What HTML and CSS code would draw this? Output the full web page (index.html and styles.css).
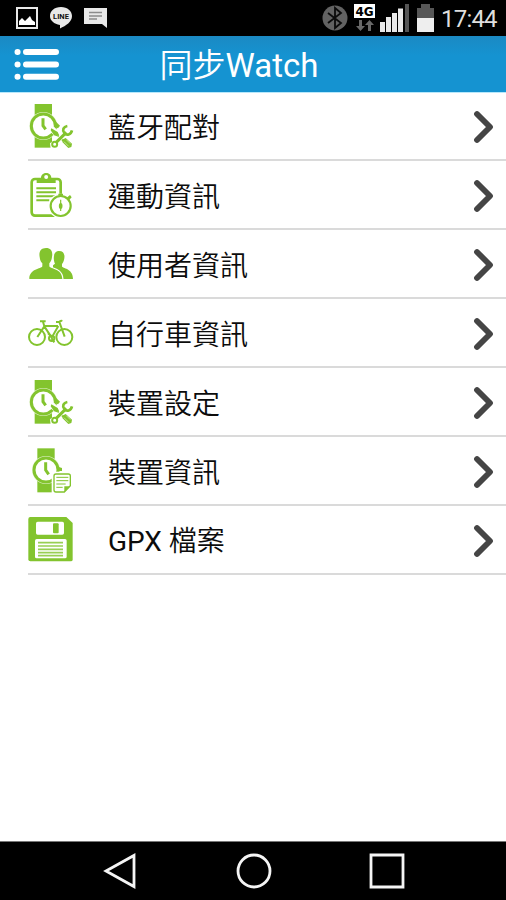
FILE: index.html
```html
<!DOCTYPE html>
<html lang="zh-Hant">
<head>
<meta charset="utf-8">
<title>同步Watch</title>
<link rel="stylesheet" href="styles.css">
</head>
<body>
<svg class="defs" width="0" height="0" aria-hidden="true">
  <symbol id="chevron" viewBox="0 0 22 36"><path d="M4 5L17 18L4 31" fill="none" stroke="#454545" stroke-width="5.8" stroke-linecap="round" stroke-linejoin="round"/></symbol>
  <symbol id="watch-tools" viewBox="0 0 138 138">
    <path d="M20 3h52v131H20z" fill="#83c42e"/>
    <circle cx="46" cy="69" r="42" fill="#e6f4d4"/>
    <circle cx="46" cy="69" r="36" fill="#fff" stroke="#83c42e" stroke-width="9"/>
    <path d="M84 56l12 12-6 8-10-4z" fill="#83c42e"/>
    <path d="M45 46v22l8 11" fill="none" stroke="#83c42e" stroke-width="9"/>
    <path d="M62 68L78 71L132 125L124 137L68 137L66 121L87 104L66 86z" fill="#fff"/>
    <path d="M70 76l19 11 4 8-6 5-9-3-10-15z" fill="#83c42e"/>
    <path d="M89 97l17 17" stroke="#83c42e" stroke-width="5"/>
    <path d="M105 109l8-4 19 17-2 10-9 3-18-18z" fill="#83c42e"/>
    <path d="M108 116l14 14M115 110l12 12" stroke="#e0f1cc" stroke-width="2"/>
    <path d="M80 123L117 84" stroke="#fff" stroke-width="14"/>
    <path d="M84 119L115 88" stroke="#83c42e" stroke-width="9"/>
    <circle cx="80" cy="124" r="7.500" fill="#fff" stroke="#83c42e" stroke-width="6"/>
    <path d="M118 69c-12 2-16 12-9 21s20 5 23-8" fill="none" stroke="#83c42e" stroke-width="8"/>
  </symbol>
</svg>
<div class="screen">
  <header class="status">
    <div class="notices">
      <svg width="22" height="22" viewBox="0 0 22 22"><path d="M1 1h20v20H1z" fill="none" stroke="#e8e8e8" stroke-width="2"/><path d="M3 18v-4l3-3 3 3 5-5 2 4 3 2v3z" fill="#fff"/></svg>
      <svg class="line" width="24" height="22" viewBox="0 0 24 22"><path d="M12 0C5.200 0 1 4 1 9c0 4.500 4 8 10 9v3.500C17 18.500 23 15 23 9 23 4 18.500 0 12 0z" fill="#e8e8e8"/><text x="12" y="11.500" text-anchor="middle">LINE</text></svg>
      <svg width="24" height="22" viewBox="0 0 24 22"><path d="M0 1h23v20l-5-4H0z" fill="#e8e8e8"/><path d="M5 5.500h13M5 9h13M5 12h8" stroke="#8b8b8b" stroke-width="1.700"/></svg>
    </div>
    <div class="system">
      <svg width="26" height="26" viewBox="0 0 26 26"><circle cx="13" cy="13" r="12.500" fill="#626262"/><path d="M6 8l13 10-6 5V3l6 5L6 18" fill="none" stroke="#0b0b0b" stroke-width="1.800"/></svg>
      <svg class="network" width="22" height="28" viewBox="0 0 22 28"><path d="M0 0h21v14H0z" fill="#fff"/><text x="10.500" y="12" text-anchor="middle">4G</text><path d="M5 16h3v6h3l-4.500 5L2 22h3zM14 27h3v-6h3l-4.500-5L11 21h3z" fill="#686868"/></svg>
      <svg width="30" height="28" viewBox="0 0 30 28"><path d="M0 18h5v10H0zM6 13h5v15H6zM12 9h5v19h-5zM18 4.500h5V28h-5z" fill="#e9e9e9"/><path d="M25 0h4v28h-4z" fill="#555"/></svg>
      <svg width="18" height="28" viewBox="0 0 18 28"><path d="M4 0h9v4h4v11H0V4h4z" fill="#575757"/><path d="M0 14h17v14H0z" fill="#eee"/></svg>
      <time>17:44</time>
    </div>
  </header>
  <div class="titlebar">
    <svg class="menu" width="46" height="32" viewBox="0 0 46 32" stroke="#fff" stroke-width="6" stroke-linecap="round"><path d="M3.500 4h.1M3.500 16.500h.1M3.500 28.700h.1M12 4h30M12 16.500h30M12 28.700h30"/></svg>
    <h1>同步<b>Watch</b></h1>
  </div>
  <ul class="list">
    <li><svg class="icon"><use href="#watch-tools"/></svg><span>藍牙配對</span><svg class="arrow"><use href="#chevron"/></svg></li>
    <li>
      <svg class="icon" viewBox="0 0 138 138">
        <rect x="11" y="21" width="87" height="110" rx="10" fill="none" stroke="#83c42e" stroke-width="8"/>
        <path d="M26 33V23q0-5 6-5h7c0-20 31-20 31 0h7q6 0 6 5v10z" fill="#83c42e"/><circle cx="54.500" cy="15" r="6" fill="#fff"/>
        <path d="M25 49h59M25 61h59M25 73h56M25 85h39" stroke="#83c42e" stroke-width="6"/>
        <circle cx="98" cy="102" r="37" fill="#fff"/>
        <circle cx="98" cy="102" r="30" fill="none" stroke="#83c42e" stroke-width="6.500"/>
        <path d="M91 65h14v6H91zM116 77l10-8 5 7-8 9z" fill="#83c42e"/>
        <path d="M98 83v34" stroke="#83c42e" stroke-width="3.500"/><ellipse cx="98" cy="102" rx="5.500" ry="9" fill="#83c42e"/>
      </svg><span>運動資訊</span><svg class="arrow"><use href="#chevron"/></svg>
    </li>
    <li>
      <svg class="icon" viewBox="0 0 138 138" fill="#83c42e">
        <path d="M93 30c13 0 18 9 16 22-1 9-5 15-7 17v7c0 7 33 5 33 38H75V73l6-5c-5-8-8-38 12-38z"/>
        <path d="M54 21c16 0 21 12 18 27-1 10-5 15-8 19v9c3 9 38 6 39 38H4c0-31 36-30 39-38v-9c-4-4-7-9-8-19-3-15 3-27 19-27z" stroke="#fff" stroke-width="7" paint-order="stroke"/>
        <path d="M0 115h138v9H0z" fill="#fff"/>
      </svg><span>使用者資訊</span><svg class="arrow"><use href="#chevron"/></svg>
    </li>
    <li>
      <svg class="icon" viewBox="0 0 138 138" fill="none" stroke="#83c42e" stroke-width="6">
        <circle cx="27" cy="81" r="24"/><circle cx="109" cy="81" r="24"/>
        <path d="M36 34h17M45 35l4 14-21 32M48 48h42M49 49l22 34 20-35M84 36h10l16 44M94 36q3-5 9-3"/>
        <circle cx="71" cy="85" r="8"/><path d="M71 85l8 12M66 75l-6-5"/>
      </svg><span>自行車資訊</span><svg class="arrow"><use href="#chevron"/></svg>
    </li>
    <li><svg class="icon"><use href="#watch-tools"/></svg><span>裝置設定</span><svg class="arrow"><use href="#chevron"/></svg></li>
    <li>
      <svg class="icon" viewBox="0 0 138 138">
        <path d="M28 1h52v132H28z" fill="#83c42e"/><circle cx="54" cy="66" r="42" fill="#e6f4d4"/>
        <circle cx="54" cy="66" r="36" fill="#fff" stroke="#83c42e" stroke-width="9"/>
        <path d="M90 56l12 4v9H90z" fill="#83c42e"/>
        <path d="M53 43v23l9 13" fill="none" stroke="#83c42e" stroke-width="9"/>
        <path d="M71 71h64v67H71z" fill="#fff"/>
        <path d="M84 78h37q6 0 6 6v29l-18 19H84q-6 0-6-6V84q0-6 6-6z" fill="#fff" stroke="#83c42e" stroke-width="4"/>
        <path d="M85 88h36M85 98h36M85 108h28M85 118h19" stroke="#83c42e" stroke-width="3"/><path d="M109 132v-17h18z" fill="#83c42e"/>
      </svg><span>裝置資訊</span><svg class="arrow"><use href="#chevron"/></svg>
    </li>
    <li>
      <svg class="icon" viewBox="0 0 138 138">
        <path d="M7 0h108l19 18v110q0 5-6 5H7q-6 0-6-6V6q0-6 6-6z" fill="#83c42e"/>
        <rect x="24" y="14" width="84" height="39" rx="5" fill="#fff"/><rect x="75" y="19" width="17" height="30" rx="3" fill="#83c42e"/>
        <rect x="21" y="66" width="95" height="58" rx="5" fill="#fff"/>
        <path d="M30 77h75M30 87h75M30 97h75M30 107h75M30 116h75" stroke="#98cf53" stroke-width="5"/>
      </svg><span class="mixed"><b>GPX</b> 檔案</span><svg class="arrow"><use href="#chevron"/></svg>
    </li>
  </ul>
  <nav class="navbar">
    <svg width="36" height="38" viewBox="0 0 36 38"><path d="M4 19L32 3.500v31z"/></svg>
    <svg width="36" height="38" viewBox="0 0 36 38"><circle cx="18" cy="19" r="16"/></svg>
    <svg width="36" height="38" viewBox="0 0 36 38"><path d="M2 3h32v32H2z"/></svg>
  </nav>
</div>
</body>
</html>
```

FILE: styles.css
```css
* { box-sizing: border-box; }
body { margin: 0; background: #fff; font-family: Roboto, "Noto Sans CJK TC", sans-serif; }
b { font-weight: 400; }
svg { display: block; flex: none; }
.defs { position: absolute; }
.screen { display: flex; flex-direction: column; width: 506px; height: 900px; }
.status { display: flex; justify-content: space-between; height: 36px; background: #000; padding: 0 10px 0 16px; }
.notices { display: flex; gap: 11px; padding-top: 7px; }
.line text { font: 700 7.500px Roboto, sans-serif; fill: #111; }
.system { display: flex; padding-top: 4px; }
.system svg:first-child { margin: 1px 6px 0 0; }
.network { margin-right: 4px; }
.network text { font: 700 12px "DejaVu Sans", sans-serif; fill: #000; }
.system svg:nth-child(3) { margin-right: 7px; }
.system time { margin-left: 6px; color: #dedede; font-size: 24px; line-height: 31px; width: 55px; white-space: nowrap; letter-spacing: -.8px; }
.titlebar { display: grid; grid-template-columns: 46px 1fr 46px; align-items: center; height: 56px; padding: 0 14px; background: linear-gradient(#1b89c3, #1593d1 35%, #1593d1); }
.titlebar h1 { margin: 0; color: #fff; font-size: 33px; font-weight: 350; line-height: 52px; text-align: center; padding: 4px 28px 0 0; }
.list { flex: 1; list-style: none; margin: 0; padding: 0; box-shadow: inset 0 1px #b8e8fb; }
.list li { display: flex; align-items: center; height: 69px; margin-left: 28px; padding: 0 11px 0 0; border-bottom: 2px solid #dadada; }
.icon { width: 46px; height: 46px; margin-right: 34px; }
.list span { flex: 1; color: #0c0c0c; font-size: 28px; font-weight: 350; line-height: 60px; padding-top: 7px; }
.list .mixed { padding-top: 5px; }
.arrow { width: 22px; height: 36px; margin-top: 3px; }
.navbar { display: flex; justify-content: space-between; height: 59px; padding: 10px 101px 0 102px; background: #000; border-top: 1px solid #777; }
.navbar svg { fill: none; stroke: #f5f5f5; stroke-width: 2.800; }
```
